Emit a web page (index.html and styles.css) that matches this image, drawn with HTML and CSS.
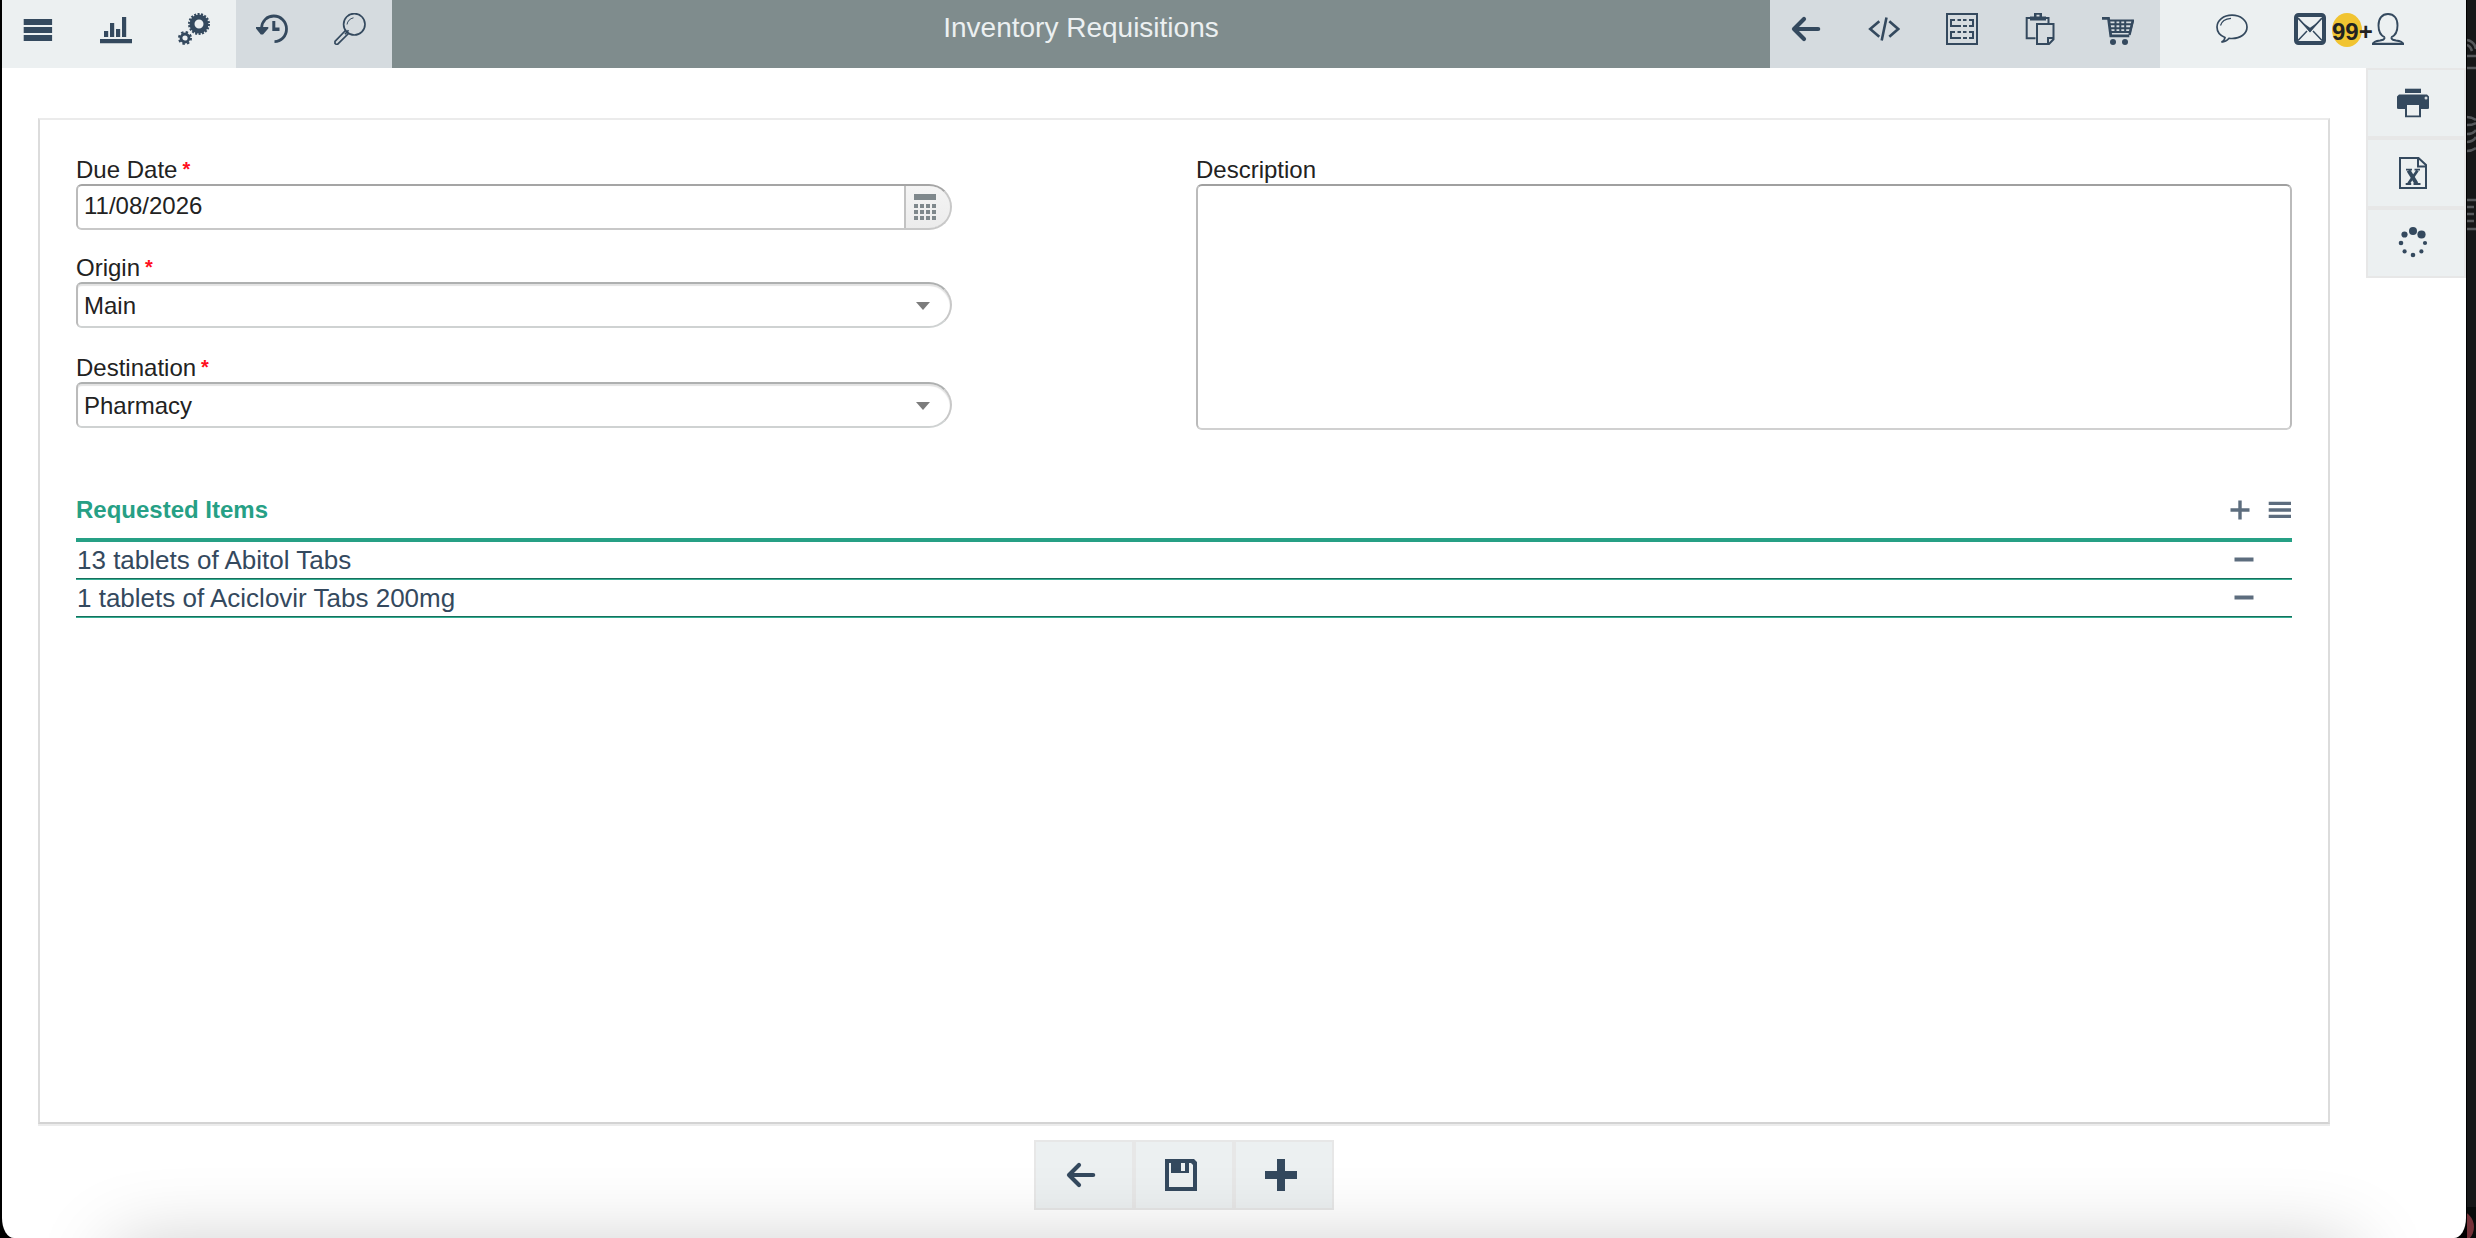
FILE: index.html
```
<!DOCTYPE html>
<html lang="en">
<head>
    <meta charset="UTF-8">
    <meta name="viewport" content="width=device-width, initial-scale=1.0">
    <title>Inventory Requisitions</title>
    <link rel="stylesheet" href="styles.css">
</head>
<body>
    <div class="window">
        <header class="topbar">
            <nav class="group light">
                <a class="tool"><svg class="icon" viewBox="0 0 32 32"><path d="M1.7 6h28.4v6H1.7zM1.7 14h28.4v6H1.7zM1.7 22h28.4v6H1.7z"/></svg></a>
                <a class="tool"><svg class="icon" viewBox="0 0 32 32"><path d="M0 26h32v4.3H0zM4 18h4.2v6H4zM10 10h4.2v14H10zM16 16h4.2v8H16zM22 4h4.2v20H22z"/></svg></a>
                <a class="tool"><svg class="icon line" viewBox="0 0 32 32">
                    <circle cx="21" cy="11" r="7" stroke-width="5"/>
                    <circle cx="21" cy="11" r="9.8" stroke-width="2.4" stroke-dasharray="2 1.42"/>
                    <circle cx="7" cy="25" r="4" stroke-width="2.8"/>
                    <circle cx="7" cy="25" r="5.9" stroke-width="2.2" stroke-dasharray="2.4 2.23"/>
                </svg></a>
            </nav>
            <nav class="group dark">
                <a class="tool"><svg class="icon line" viewBox="0 0 32 32">
                    <path stroke-width="2.8" d="M5.5 15C6 8 11 3 17.8 3c7 0 12.700 5.700 12.700 13S25 28.600 18.500 28.600"/>
                    <path class="solid" d="M0 14h12.300v1.500L7 21.500H4.800L0 15.500zM16.300 8h3v6.500h4.200V18h-7.200z"/>
                </svg></a>
                <a class="tool"><svg class="icon line" viewBox="0 0 32 32" stroke-width="1.7">
                    <circle cx="20.300" cy="11.300" r="10.700"/>
                    <path d="M11.500 17.500L1 28.300v2.200c.8.900 1.700.9 2.700.7L14.500 20.500M14.500 17.200l-3.500 4"/>
                    <path stroke-width="1" d="M13 11.500c.5-3.500 3-6 6.500-6.700"/>
                </svg></a>
            </nav>
            <h1 class="title">Inventory Requisitions</h1>
            <nav class="group dark">
                <a class="tool"><svg class="icon line" viewBox="0 0 32 32"><path class="arrow" d="M28.200 16H4M14 6L4 16l10 10"/></svg></a>
                <a class="tool"><svg class="icon line" viewBox="0 0 32 32" stroke-width="2.600"><path d="M11.300 8.200L2.200 16l9.100 7.800M21.300 8.200l8.900 7.800-8.900 7.800M18.500 4.500l-4.800 23"/></svg></a>
                <a class="tool"><svg class="icon line" viewBox="0 0 32 32">
                    <path stroke-width="2" d="M1 1h30v30H1z"/>
                    <path stroke-width="2" d="M9 7H5v6h4M11.500 7h3.500M17 7h3.500M23 7h4v6h-4M9 13h6M17 13h4M9 19H5v6h4M11.500 19h3.500M17 19h3.500M23 19h4v6h-4M9 25h6M17 25h4"/>
                </svg></a>
                <a class="tool"><svg class="icon line" viewBox="0 0 32 32" stroke-width="2">
                    <path d="M11.500 25.200H2.700V5H6M21.500 5h3v5"/>
                    <path class="solid" d="M10 0h8v3.500h4v4H6v-4h4zM12.500 1.800v1.700h3V1.800z" fill-rule="evenodd"/>
                    <path d="M13 11h16.500v15.300L25 30.900H13zM29.500 25h-5.500v6"/>
                </svg></a>
                <a class="tool"><svg class="icon line" viewBox="0 0 32 32">
                    <path stroke-width="2.800" d="M0 5.300h6.500l2.300 17.500h18.500"/>
                    <path stroke-width="2" d="M7 7.500h24L28 19H8.500M8 11.200h22M8 15.200h21M13.500 7.500V19M18.300 7.500V19M23.200 7.500V19"/>
                    <path stroke-width="2.400" d="M31 7l-3.500 15"/>
                    <circle class="solid" cx="11" cy="29" r="3"/><circle class="solid" cx="23" cy="29" r="3"/>
                </svg></a>
            </nav>
            <nav class="group light account">
                <a class="tool"><svg class="icon line" viewBox="0 0 32 32" stroke-width="1.700">
                    <path d="M9 24.500C4 22.500 1 18.800 1 14 1 7.200 7.500 2.200 16 2.200S31 7.200 31 14s-6.500 11.500-15 11.500c-1 0-2-.1-3-.2-2 2.500-4.500 3.700-7.500 3.800 2-1 3.200-2.500 3.500-4.600z"/>
                    <path stroke-width="1.200" d="M4.500 12.500C5.500 8.500 9.500 5.800 15 5.300"/>
                </svg></a>
                <a class="tool mail"><svg class="icon line" viewBox="0 0 32 32">
                    <rect x="2" y="2" width="28" height="28" rx="2.500" stroke-width="4"/>
                    <path stroke-width="1.500" d="M4 27.500l9-9.500M28 27.500L19 18"/>
                    <path stroke-width="1.800" d="M4 5l12 13L28 5"/>
                    <path class="solid" d="M7 8.500l9 6.300 9-6.300-9 10.900z"/>
                </svg><span class="badge">99+</span></a>
                <a class="tool"><svg class="icon line" viewBox="0 0 32 32" stroke-width="1.900">
                    <path d="M12.800 24.300C8.500 22.500 6.500 18 6.500 12.500 6.500 5.500 10 1 16 1s9.500 4.500 9.500 11.500c0 5.500-2 10-6.300 11.800M12.800 24.300c-.5 2.500-1.500 2.700-4.800 3.200-4 .5-6.500 1-7 3.500h30c-.5-2.500-3-3-7-3.500-3.300-.5-4.300-.7-4.800-3.200"/>
                    <path stroke-width="2.500" d="M0 31h32"/>
                </svg></a>
            </nav>
        </header>

        <main class="content">
            <section class="card">
                <div class="form">
                    <div class="fields">
                        <div class="field">
                            <label>Due Date<span class="required">*</span></label>
                            <div class="control date">
                                <span class="value">11/08/2026</span>
                                <span class="picker"><svg viewBox="0 0 22 26"><path d="M0 0h22v6H0zM0 10h4v4H0zM6 10h4v4H6zM12 10h4v4h-4zM18 10h4v4h-4zM0 16h4v4H0zM6 16h4v4H6zM12 16h4v4h-4zM18 16h4v4h-4zM0 22h4v4H0zM6 22h4v4H6zM12 22h4v4h-4zM18 22h4v4h-4z"/></svg></span>
                            </div>
                        </div>
                        <div class="field">
                            <label>Origin<span class="required">*</span></label>
                            <div class="control select"><span class="value">Main</span><svg class="caret" viewBox="0 0 14 8"><path d="M0 0h14L7 8z"/></svg></div>
                        </div>
                        <div class="field">
                            <label>Destination<span class="required">*</span></label>
                            <div class="control select"><span class="value">Pharmacy</span><svg class="caret" viewBox="0 0 14 8"><path d="M0 0h14L7 8z"/></svg></div>
                        </div>
                    </div>
                    <div class="field description">
                        <label>Description</label>
                        <textarea></textarea>
                    </div>
                </div>

                <div class="items-head">
                    <h2>Requested Items</h2>
                    <div class="items-tools">
                        <svg class="small" viewBox="0 0 24 24"><path d="M2.500 10.300h7.800V2.500h3.400v7.800h7.800v3.400h-7.800v7.800h-3.400v-7.800H2.500z"/></svg>
                        <svg class="small" viewBox="0 0 24 24"><path d="M.7 3.700H23V7H.7zM.7 10.200H23v3.600H.7zM.7 16.800H23V20H.7z"/></svg>
                    </div>
                </div>
                <ul class="items">
                    <li><span>13 tablets of Abitol Tabs</span><svg class="small" viewBox="0 0 24 24"><path d="M2.500 9.500h19v4h-19z"/></svg></li>
                    <li><span>1 tablets of Aciclovir Tabs 200mg</span><svg class="small" viewBox="0 0 24 24"><path d="M2.500 9.500h19v4h-19z"/></svg></li>
                </ul>
            </section>

            <aside class="side">
                <a class="button"><svg class="icon" viewBox="0 0 32 32">
                    <path d="M8 1.700h16V6H8z"/>
                    <path fill-rule="evenodd" d="M2 7.500h28l2 2v12L30.500 22H24v8.300H8V22H1.500L0 21.500v-12zM10 18v10.500h12V18z"/>
                    <circle class="dot" cx="29" cy="11" r="1.500"/>
                </svg></a>
                <a class="button"><svg class="icon line" viewBox="0 0 32 32">
                    <path stroke-width="2" d="M3 1h18.500L29 8v23H3zM21 1v8.500h8"/>
                    <path stroke-width="4" d="M11.500 13.500l8 13"/>
                    <path stroke-width="2.800" d="M20.500 13.500l-9 13"/>
                    <path stroke-width="1.800" d="M9 12.700h6M17.500 12.700h5.500M8.700 27h5.500M16.500 27h7"/>
                </svg></a>
                <a class="button"><svg class="icon" viewBox="0 0 32 32">
                    <circle cx="16" cy="4" r="4"/><circle cx="24.500" cy="7.500" r="4.100"/><circle cx="28" cy="16" r="2.100"/><circle cx="24.400" cy="24.400" r="2.100"/>
                    <circle cx="16" cy="28" r="2.300"/><circle cx="7.600" cy="24.400" r="2.100"/><circle cx="4" cy="16" r="2.300"/><circle cx="7.500" cy="7.500" r="3.100"/>
                </svg></a>
            </aside>
        </main>

        <footer class="actions">
            <a class="button"><svg class="icon line" viewBox="0 0 32 32"><path class="arrow" d="M28.200 16H4M14 6L4 16l10 10"/></svg></a>
            <a class="button"><svg class="icon" viewBox="0 0 32 32"><path fill-rule="evenodd" d="M0 0h29l3 3v29H0zM4 4v24h24V6l-2-2h-2v10H6V4zM16 4v8h4V4z"/></svg></a>
            <a class="button"><svg class="icon" viewBox="0 0 32 32"><path d="M12 0h8v12h12v8H20v12h-8V20H0v-8h12z"/></svg></a>
        </footer>
        <div class="dock-shadow"></div>
    </div>

    <!-- strip of desktop next to the window -->
    <svg class="desktop" viewBox="0 0 9 1238">
        <path d="M0 40c5 1 8 4 9 9M0 45c3 1 4 3 5 6M0 56h9M0 68h9M0 117q5 0 9 3M0 125q5 0 9-2M0 134q6 0 9-4M0 142q6 0 9-5M0 151q5 0 9-3M0 200h9M0 207h7M0 214h7M0 221h7M0 229h9"/>
        <path class="dock" d="M0 1207h9v31H0z"/>
        <circle cx="-10" cy="1227" r="17"/>
    </svg>
</body>
</html>
```

FILE: styles.css
```
* {
    margin: 0;
    padding: 0;
    box-sizing: border-box;
}

body {
    display: flex;
    width: 2476px;
    height: 1238px;
    overflow: hidden;
    background-color: #000;
    font-family: "Liberation Sans", Arial, sans-serif;
    font-size: 24px;
    color: #222;
}

.window {
    position: relative;
    width: 2464px;
    height: 1238px;
    margin-left: 2px;
    background: #fff;
    border-radius: 0 0 12px 12px / 0 0 20px 20px;
    overflow: hidden;
    display: flex;
    flex-direction: column;
}

.desktop {
    width: 9px;
    height: 1238px;
    margin-left: 1px;
    background: #161718;
    fill: none;
    stroke: #55575a;
    stroke-width: 2.5;
}

.desktop .dock {
    fill: #080a0a;
    stroke: none;
}

.desktop circle {
    fill: #753239;
    stroke: none;
}

/* top bar */
.topbar {
    display: flex;
    height: 68px;
    background: #7f8c8d;
}

.group {
    display: flex;
}

.light {
    background: #ecf0f1;
}

.dark {
    background: #d5dbdf;
}

.tool {
    position: relative;
    width: 78px;
    padding: 13px 0 0 20px;
}

.account {
    width: 306px;
    padding-left: 36px;
}

.title {
    flex: 1;
    padding-top: 12px;
    text-align: center;
    font-size: 28px;
    line-height: 32px;
    font-weight: normal;
    color: #ecf0f1;
}

.icon {
    display: block;
    width: 32px;
    height: 32px;
    fill: #34495e;
}

.line {
    fill: none;
    stroke: #34495e;
}

.line .solid {
    fill: #34495e;
    stroke: none;
}

.arrow {
    stroke-width: 4.2;
    stroke-linecap: round;
    stroke-linejoin: round;
}

.dot {
    fill: #d5dbdf;
}

.badge {
    position: absolute;
    left: 58px;
    top: 13px;
    z-index: 1;
    width: 30px;
    height: 34px;
    border-radius: 50%;
    background: #f1c431;
    font-size: 24px;
    line-height: 38px;
    font-weight: bold;
    color: #222;
}

/* page */
.content {
    display: flex;
    justify-content: space-between;
    height: 1058px;
}

.card {
    width: 2292px;
    height: 1006px;
    margin: 50px 0 0 36px;
    padding: 0 36px;
    border: 2px solid #dcdcdc;
    border-top-color: #ebebeb;
    border-bottom-color: #d3d3d3;
    box-shadow: 0 2px 0 #ececec;
}

.form {
    display: flex;
    justify-content: space-between;
    padding-top: 36px;
}

.fields {
    width: 876px;
}

.field {
    height: 98px;
}

.field + .field {
    height: 100px;
}

label {
    display: block;
    height: 28px;
    line-height: 28px;
}

.required {
    position: relative;
    top: -2px;
    margin-left: 5px;
    font-weight: bold;
    font-size: 20px;
    line-height: 20px;
    color: #ff1020;
}

.control {
    display: flex;
    align-items: center;
    height: 46px;
    border: 2px solid #c8c8c8;
    border-top-color: #a5a5a5;
    border-left-color: #bbb;
    border-radius: 6px 24px 24px 6px;
    overflow: hidden;
}

.value {
    flex: 1;
    padding-left: 6px;
}

.date .value {
    padding-bottom: 3px;
}

.select {
    padding-right: 20px;
    border-top-color: #aeb0b0;
    border-bottom-color: #cfd2d2;
    box-shadow: inset 0 2px 1px #e3e3e3;
}

.select .value {
    padding-top: 1px;
}

.caret {
    width: 14px;
    height: 8px;
    margin-top: 1px;
    fill: #7c7c7c;
}

.picker {
    display: flex;
    align-items: center;
    width: 48px;
    height: 46px;
    margin: -2px;
    padding-left: 8px;
    border: 2px solid #c2c2c2;
    border-radius: 0 24px 24px 0;
    background: linear-gradient(#f4f4f4, #ececec);
}

.picker svg {
    width: 22px;
    height: 26px;
    fill: #7f888c;
}

.fields + .description {
    width: 1096px;
    height: 274px;
}

.fields + .description {
    width: 1096px;
}

.description textarea {
    display: block;
    width: 100%;
    height: 246px;
    border: 2px solid #bbb;
    border-top-color: #a0a0a0;
    border-bottom-color: #d0d0d0;
    border-radius: 6px;
    resize: none;
}

/* requested items */
.items-head {
    display: flex;
    justify-content: space-between;
    height: 52px;
    margin-top: 36px;
    border-bottom: 4px solid #26a085;
}

h2 {
    font-size: 24px;
    line-height: 28px;
    padding-top: 6px;
    color: #26a085;
}

.items-tools {
    display: flex;
    gap: 16px;
    padding-top: 8px;
}

.small {
    width: 24px;
    height: 24px;
    fill: #5d6d7e;
}

.items {
    list-style: none;
}

.items li {
    display: flex;
    justify-content: space-between;
    align-items: center;
    height: 38px;
    padding-right: 36px;
    border-bottom: 1px solid #34ad92;
    box-shadow: inset 0 -1px 0 #16705c;
    font-size: 26px;
    color: #34495e;
}

.items span {
    padding-left: 1px;
}

.items .small {
    margin-top: -1px;
}

/* buttons */
.button {
    display: block;
    width: 100px;
    height: 70px;
    padding: 17px 0 0 29px;
    border: 2px solid #e7e7e7;
    background: #ecf0f1;
}

.actions {
    display: flex;
    margin: 14px 0 0 1032px;
}

/* soft shade along the bottom edge */
.dock-shadow {
    position: absolute;
    left: 120px;
    right: 120px;
    top: 1254px;
    height: 60px;
    box-shadow: 0 0 80px 6px rgba(0, 0, 0, 0.23);
    pointer-events: none;
}
```
